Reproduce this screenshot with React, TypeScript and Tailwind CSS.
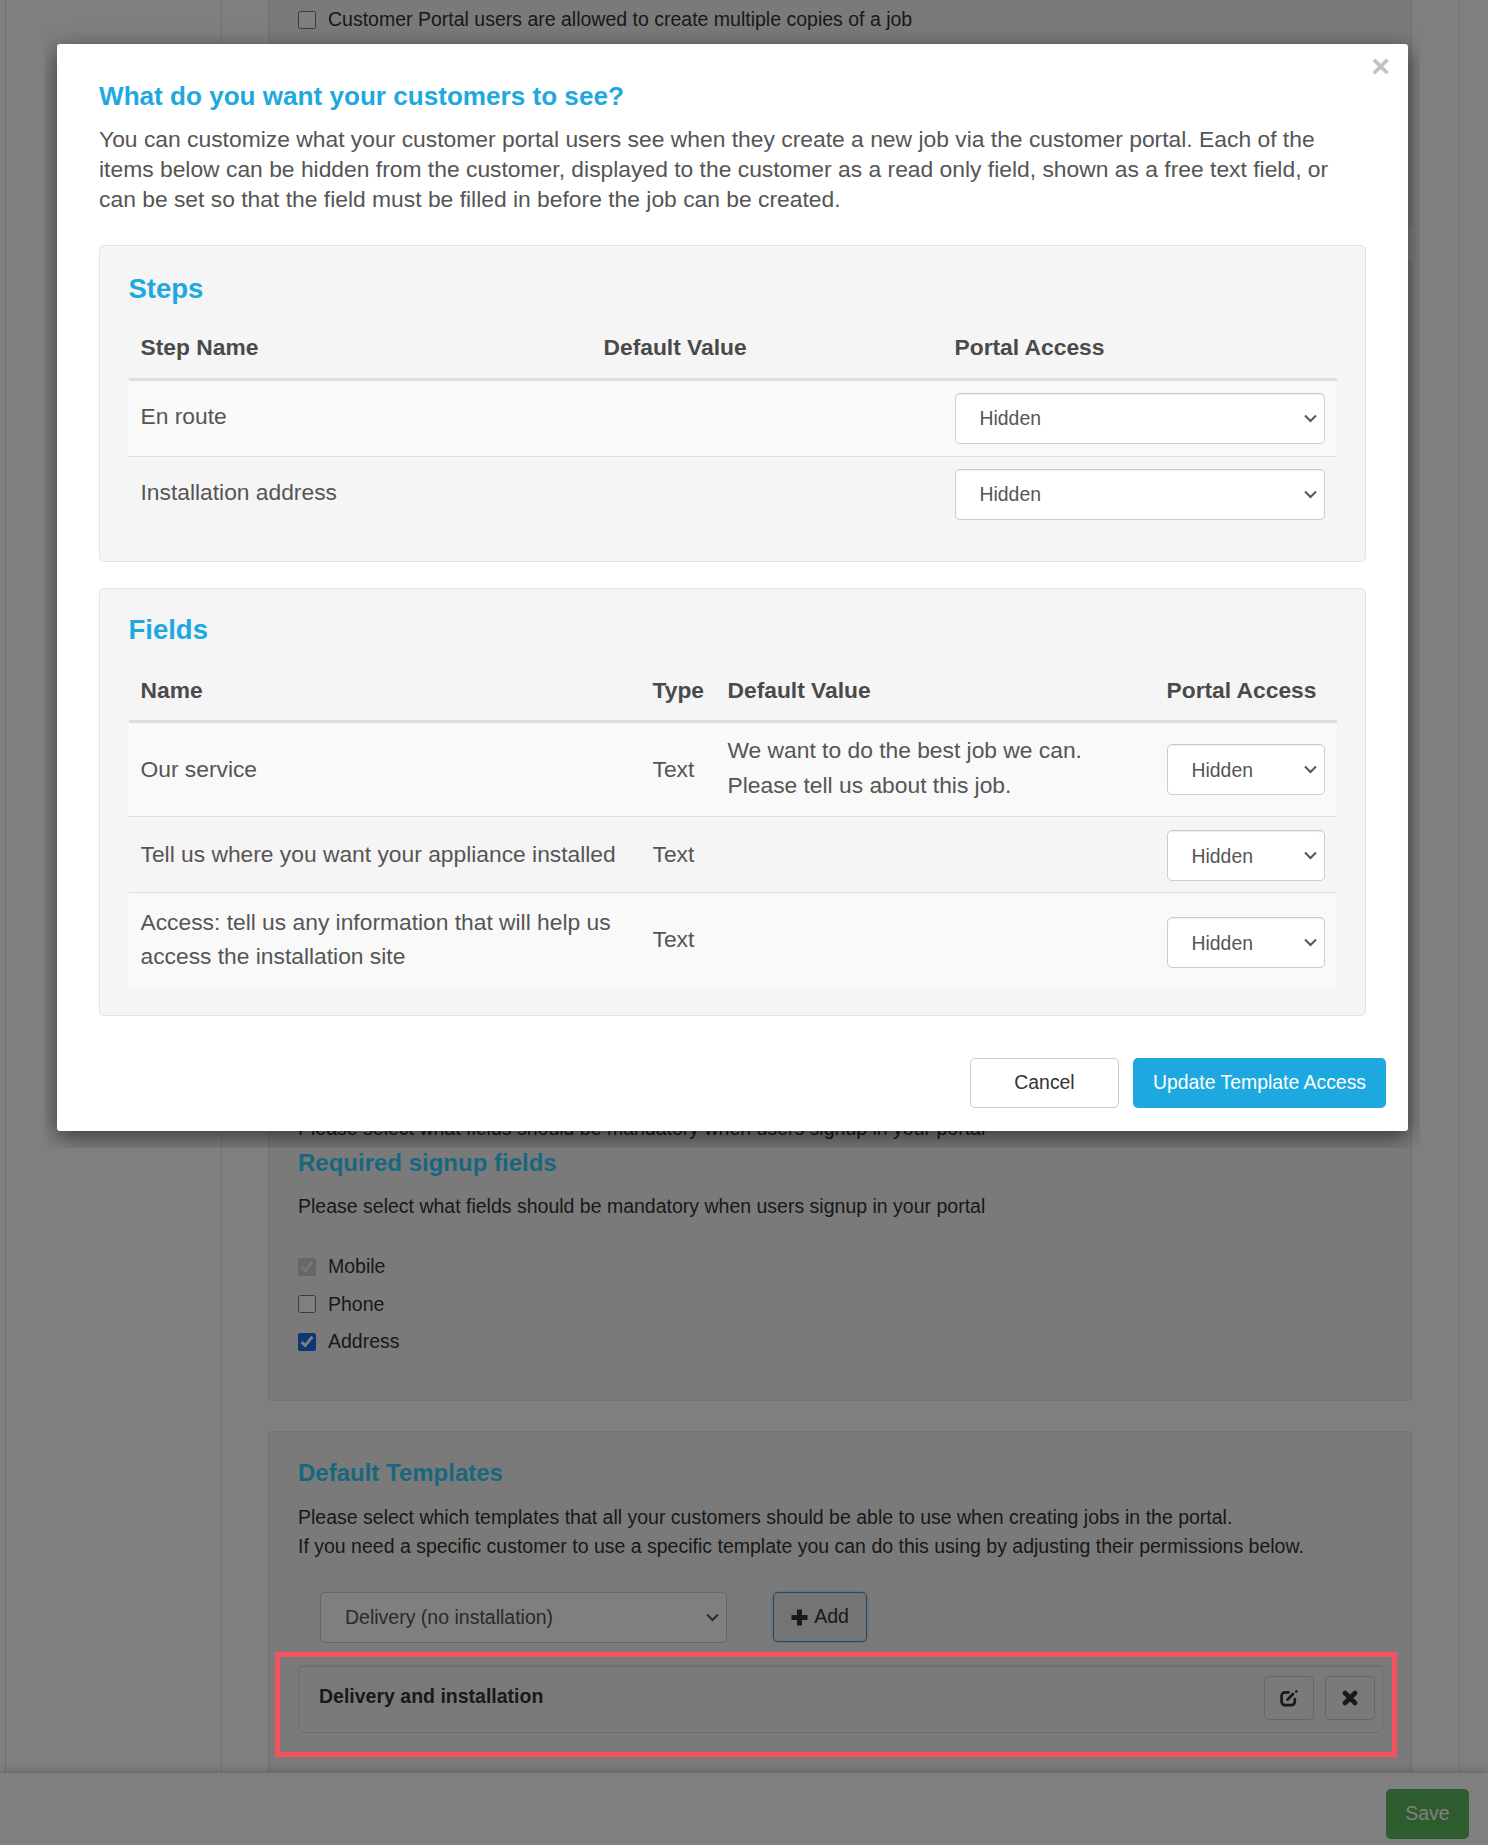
import React from 'react';

const Chevron = () => (
  <svg
    className="pointer-events-none absolute right-[8px] top-[21px]"
    width="13"
    height="9"
    viewBox="0 0 13 9"
    fill="none"
    stroke="#555"
    strokeWidth="2"
  >
    <path d="M1 1.5 6.5 7 12 1.5" />
  </svg>
);

const PortalSelect = ({ wide }: { wide?: boolean }) => (
  <div className={`relative ${wide ? 'w-[370px]' : 'w-[158px]'}`}>
    <select
      defaultValue="Hidden"
      className="block h-[51px] w-full appearance-none rounded-[5px] border border-[#ccc] bg-white pl-[24px] text-[19.4px] text-[#555] shadow-[inset_0_1px_1px_rgba(0,0,0,0.075)]"
    >
      <option>Hidden</option>
      <option>Read only</option>
      <option>Free text</option>
      <option>Required</option>
    </select>
    <Chevron />
  </div>
);

const CheckRow = ({ label, checked, disabled }: { label: string; checked?: boolean; disabled?: boolean }) => (
  <label className="flex h-[37.5px] items-center gap-[12px] text-[19.5px] text-[#333]">
    <input
      type="checkbox"
      defaultChecked={checked}
      disabled={disabled}
      className="h-[18px] w-[18px] accent-[#1a6ee8]"
    />
    {label}
  </label>
);

const PageBehind = () => (
  <div className="flex h-[1845px] w-full flex-col">
    <div className="flex h-[1773px] overflow-hidden">
      <div className="w-[6px] border-r border-[#ddd]" />
      <div className="w-[216px] border-r border-[#e6e6e6]" />
      <div className="w-[46px]" />
      <main className="w-[1144px]">
        <section className="h-[229px] rounded-b-[5px] border border-t-0 border-[#e3e3e3] bg-[#f5f5f5] pl-[29px] pt-[1px]">
          <CheckRow label="Customer Portal users are allowed to create multiple copies of a job" />
        </section>
        <section className="mt-[31px] h-[1141px] rounded-[5px] border border-[#e3e3e3] bg-[#f5f5f5] pl-[29px]">
          <p className="mt-[854px] h-[26px] text-[19.5px] leading-[26px] text-[#333]">
            Please select what fields should be mandatory when users signup in your portal
          </p>
          <h3 className="mt-[7px] h-[30px] text-[24px] font-bold leading-[30px] text-[#2fd0ff]">Required signup fields</h3>
          <p className="mt-[15px] h-[26px] text-[19.5px] leading-[26px] text-[#333]">
            Please select what fields should be mandatory when users signup in your portal
          </p>
          <div className="mt-[29px]">
            <CheckRow label="Mobile" checked disabled />
            <CheckRow label="Phone" />
            <CheckRow label="Address" checked />
          </div>
        </section>
        <section className="mt-[30px] h-[400px] rounded-t-[5px] border border-[#e3e3e3] bg-[#f5f5f5] pl-[29px]">
          <h3 className="mt-[26px] h-[30px] text-[24px] font-bold leading-[30px] text-[#2fd0ff]">Default Templates</h3>
          <p className="mt-[15px] text-[19.5px] leading-[29px] text-[#333]">
            Please select which templates that all your customers should be able to use when creating jobs in the portal.
            <br />
            If you need a specific customer to use a specific template you can do this using by adjusting their permissions below.
          </p>
          <div className="mt-[31px] flex items-start pl-[22px]">
            <div className="relative w-[407px]">
              <select
                defaultValue="Delivery (no installation)"
                className="block h-[51px] w-full appearance-none rounded-[5px] border border-[#ccc] bg-white pl-[24px] text-[19.5px] text-[#555]"
              >
                <option>Delivery (no installation)</option>
                <option>Delivery and installation</option>
              </select>
              <Chevron />
            </div>
            <button className="ml-[46px] flex h-[50px] w-[94px] items-center justify-center gap-[6px] rounded-[5px] border border-[#4a90c8] bg-[#e8e8e8] text-[19.5px] text-[#333] shadow-[0_0_3px_rgba(80,150,210,0.5)]">
              <svg width="17" height="17" viewBox="0 0 17 17" fill="#333">
                <path d="M6 0.5h5v5.500h5.500v5H11v5.500H6V11H0.500V6H6z" />
              </svg>
              Add
            </button>
          </div>
          <div className="mt-[22px] flex h-[68px] w-[1085px] items-start justify-between rounded-[5px] border border-t-2 border-[#ddd] pl-[20px] pr-[7px]">
            <span className="mt-[16px] text-[19.5px] font-bold leading-[26px] text-[#333]">Delivery and installation</span>
            <div className="mt-[9px] flex gap-[11px]">
              <button className="flex h-[44px] w-[50px] items-center justify-center rounded-[5px] border border-[#ccc]">
                <svg width="18" height="17" viewBox="0 0 18 17" fill="none" stroke="#333" strokeWidth="2.7" strokeLinecap="round">
                  <path d="M8.500 2.400H5A3.400 3.400 0 0 0 1.600 5.800v6A3.400 3.400 0 0 0 5 15.200h6.400a3.400 3.400 0 0 0 3.400-3.400V9" />
                  <path d="M7.500 9.600 13 4" />
                  <circle cx="16.400" cy="1.400" r="0.600" strokeWidth="1.600" />
                </svg>
              </button>
              <button className="flex h-[44px] w-[50px] items-center justify-center rounded-[5px] border border-[#ccc]">
                <svg width="16" height="16" viewBox="0 0 16 16" fill="none" stroke="#333" strokeWidth="4.600" strokeLinecap="round">
                  <path d="M3 3 13 13M13 3 3 13" />
                </svg>
              </button>
            </div>
          </div>
        </section>
      </main>
      <div className="w-[48px] border-r border-[#e6e6e6]" />
    </div>
    <footer className="relative flex h-[72px] justify-end bg-white pr-[19px] pt-[16px] shadow-[0_-2px_8px_rgba(0,0,0,0.2)]">
      <button className="h-[50px] w-[83px] rounded-[5px] bg-[#5cb85c] text-[19.5px] text-white">Save</button>
    </footer>
  </div>
);

const StepsPanel = () => (
  <section className="rounded-[5px] border border-[#e3e3e3] bg-[#f5f5f5] px-[28.5px] pb-[29px] pt-[27px]">
    <h4 className="h-[32px] text-[27.5px] font-bold leading-[32px] text-[#1da9e0]">Steps</h4>
    <table className="w-full table-fixed text-[22.8px] leading-[34px] text-[#555]">
      <thead>
        <tr className="h-[74px] border-b-[3px] border-[#ddd] text-left text-[#4a4a4a]">
          <th className="w-[463px] pl-[12px] pb-[14px] align-bottom font-bold">Step Name</th>
          <th className="w-[351px] pl-[12px] pb-[14px] align-bottom font-bold">Default Value</th>
          <th className="pl-[12px] pb-[14px] align-bottom font-bold">Portal Access</th>
        </tr>
      </thead>
      <tbody>
        <tr className="bg-[#f9f9f9]">
          <td className="pb-[5px] pl-[12px]">En route</td>
          <td />
          <td className="py-[12px] pl-[12px]"><PortalSelect wide /></td>
        </tr>
        <tr className="border-t border-[#ddd]">
          <td className="pb-[5px] pl-[12px]">Installation address</td>
          <td />
          <td className="py-[12px] pl-[12px]"><PortalSelect wide /></td>
        </tr>
      </tbody>
    </table>
  </section>
);

const FieldsPanel = () => (
  <section className="mt-[26px] rounded-[5px] border border-[#e3e3e3] bg-[#f5f5f5] px-[28.5px] pb-[28px] pt-[25px]">
    <h4 className="h-[32px] text-[27.5px] font-bold leading-[32px] text-[#1da9e0]">Fields</h4>
    <table className="w-full table-fixed text-[22.8px] leading-[34px] text-[#555]">
      <thead>
        <tr className="h-[76px] border-b-[3px] border-[#ddd] text-left text-[#4a4a4a]">
          <th className="w-[512px] pl-[12px] pb-[13px] align-bottom font-bold">Name</th>
          <th className="w-[75px] pl-[12px] pb-[13px] align-bottom font-bold">Type</th>
          <th className="w-[439px] pl-[12px] pb-[13px] align-bottom font-bold">Default Value</th>
          <th className="pl-[12px] pb-[13px] align-bottom font-bold">Portal Access</th>
        </tr>
      </thead>
      <tbody>
        <tr className="h-[95px] bg-[#f9f9f9]">
          <td className="pb-[2px] pl-[12px]">Our service</td>
          <td className="pb-[2px] pl-[12px]">Text</td>
          <td className="pb-[3px] pl-[12px] leading-[35px]">We want to do the best job we can.<br />Please tell us about this job.</td>
          <td className="pl-[12px]"><PortalSelect /></td>
        </tr>
        <tr className="h-[76px] border-t border-[#ddd]">
          <td className="pb-[2px] pl-[12px]">Tell us where you want your appliance installed</td>
          <td className="pb-[2px] pl-[12px]">Text</td>
          <td />
          <td className="pl-[12px] pt-[2px]"><PortalSelect /></td>
        </tr>
        <tr className="h-[94px] border-t border-[#ddd] bg-[#f9f9f9]">
          <td className="pb-[2px] pl-[12px]">Access: tell us any information that will help us access the installation site</td>
          <td className="pb-[2px] pl-[12px]">Text</td>
          <td />
          <td className="pl-[12px] pt-[6px]"><PortalSelect /></td>
        </tr>
      </tbody>
    </table>
  </section>
);

export default function App() {
  return (
    <div className="relative h-[1845px] w-[1488px] overflow-hidden bg-white font-['Liberation_Sans',Arial,sans-serif]">
      <PageBehind />

      {/* Backdrop */}
      <div className="absolute inset-0 bg-black/50" />

      {/* Modal, its shadow is cut off by the dialog wrapper */}
      <div className="absolute left-[44px] top-0 h-[1148px] w-[1376px] overflow-hidden">
        <div className="absolute left-[13px] top-[44px] h-[1087px] w-[1351px] rounded-[3px] bg-white px-[42px] pt-[37px] shadow-[0_6px_22px_rgba(0,0,0,0.55)]">
          <button className="absolute right-[18px] top-[2px] text-[32px] font-bold leading-[40px] text-[#c2c2c2]">×</button>
          <h3 className="h-[30px] text-[26.1px] font-bold leading-[30px] text-[#1da9e0]">What do you want your customers to see?</h3>
          <p className="mt-[13px] text-[22.85px] leading-[30px] text-[#555]">
            You can customize what your customer portal users see when they create a new job via the customer portal. Each of the items below can be hidden from the customer, displayed to the customer as a read only field, shown as a free text field, or can be set so that the field must be filled in before the job can be created.
          </p>
          <div className="mt-[31px]">
            <StepsPanel />
            <FieldsPanel />
          </div>
          <div className="-mr-[20px] mt-[42px] flex justify-end gap-[14px]">
            <button className="h-[50px] w-[149px] rounded-[5px] border border-[#ccc] bg-white text-[19.4px] text-[#333]">Cancel</button>
            <button className="h-[50px] w-[253px] rounded-[5px] bg-[#1da9e0] text-[19.4px] text-white">Update Template Access</button>
          </div>
        </div>
      </div>

      {/* Annotation drawn over the screenshot */}
      <div className="absolute left-[275px] top-[1652px] h-[105px] w-[1122px] border-[5px] border-[#f4525f]" />
    </div>
  );
}
